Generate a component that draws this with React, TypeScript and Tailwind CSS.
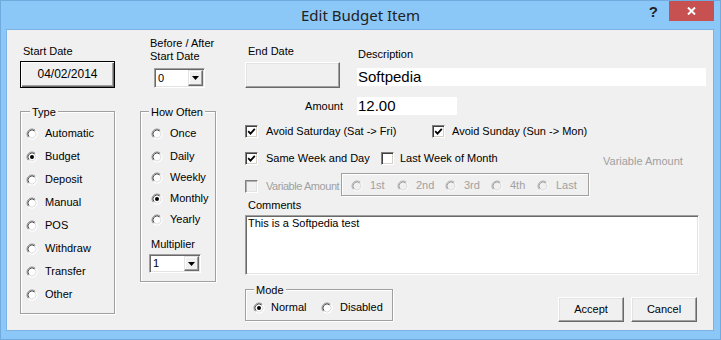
import React from "react";

function Radio({ checked = false, disabled = false }: { checked?: boolean; disabled?: boolean }) {
  return (
    <svg width="12" height="12" viewBox="0 0 12 12" className="shrink-0">
      <circle cx="6" cy="6" r="5.5" fill={disabled ? "#f0f0f0" : "#ffffff"} />
      <path d="M2.46 9.54 A5 5 0 0 1 9.54 2.46" fill="none" stroke={disabled ? "#b0b0b0" : "#8a8a8a"} strokeWidth="1" />
      <path d="M3.17 8.83 A4 4 0 0 1 8.83 3.17" fill="none" stroke={disabled ? "#a0a0a0" : "#505050"} strokeWidth="1" />
      <path d="M9.54 2.46 A5 5 0 0 1 2.46 9.54" fill="none" stroke="#ffffff" strokeWidth="1" />
      <path d="M8.83 3.17 A4 4 0 0 1 3.17 8.83" fill="none" stroke="#dcdcdc" strokeWidth="1" />
      {checked && <circle cx="6" cy="6" r="2" fill={disabled ? "#a0a0a0" : "#000000"} />}
    </svg>
  );
}

function Check({ checked = false, disabled = false }: { checked?: boolean; disabled?: boolean }) {
  return (
    <span
      className={
        disabled
          ? "w-[13px] h-[13px] shrink-0 flex items-center justify-center bg-[#f0f0f0] border border-t-[#808080] border-l-[#808080] border-b-white border-r-white shadow-[inset_1px_1px_0_#b0b0b0,inset_-1px_-1px_0_#e3e3e3]"
          : "w-[13px] h-[13px] shrink-0 flex items-center justify-center bg-white border border-t-[#808080] border-l-[#808080] border-b-white border-r-white shadow-[inset_1px_1px_0_#404040,inset_-1px_-1px_0_#d4d0c8]"
      }
    >
      {checked && (
        <svg width="9" height="9" viewBox="0 0 9 9">
          <path d="M1.2 4.2 L3.5 6.6 L7.8 1.8" stroke="#000" strokeWidth="1.8" fill="none" />
        </svg>
      )}
    </span>
  );
}

function Combo({ className, value }: { className: string; value: string }) {
  return (
    <div
      className={
        "flex bg-white p-[1px] border border-t-[#a0a0a0] border-l-[#a0a0a0] border-b-white border-r-white shadow-[inset_1px_1px_0_#696969,inset_-1px_-1px_0_#e3e3e3] " +
        className
      }
    >
      <span className="flex-1 pl-[2px] flex items-center">{value}</span>
      <span className="w-[15px] flex items-center justify-center bg-[#f0f0f0] border border-t-[#e3e3e3] border-l-[#e3e3e3] border-b-[#696969] border-r-[#696969] shadow-[inset_-1px_-1px_0_#a0a0a0,inset_1px_1px_0_#fff]">
        <svg width="7" height="4" viewBox="0 0 7 4">
          <path d="M0 0 H7 L3.5 4 Z" fill="#000" />
        </svg>
      </span>
    </div>
  );
}

function Group({
  className,
  legend,
  legendClass,
  children,
}: {
  className: string;
  legend: string;
  legendClass: string;
  children?: React.ReactNode;
}) {
  return (
    <div className={"relative border border-[#a0a0a0] shadow-[inset_1px_1px_0_#fff,1px_1px_0_#fff] " + className}>
      <span className={"absolute top-[-6px] bg-[#f0f0f0] px-[2px] " + legendClass}>{legend}</span>
      {children}
    </div>
  );
}

const raised =
  "bg-[#f0f0f0] border border-t-white border-l-white border-b-[#696969] border-r-[#696969] shadow-[inset_-1px_-1px_0_#a0a0a0,inset_1px_1px_0_#e3e3e3]";

export default function App() {
  const types = ["Automatic", "Budget", "Deposit", "Manual", "POS", "Withdraw", "Transfer", "Other"];
  const often = ["Daily", "Weekly", "Monthly", "Yearly"];
  const nth = [
    { t: "1st", w: "w-[46px]" },
    { t: "2nd", w: "w-[48px]" },
    { t: "3rd", w: "w-[46px]" },
    { t: "4th", w: "w-[46px]" },
    { t: "Last", w: "" },
  ];
  return (
    <div className="w-[721px] h-[340px] bg-[#8bc7f7] border border-[#70aadf] flex flex-col overflow-hidden">
      <div className="h-[29px] shrink-0 grid grid-cols-[1fr_auto_1fr]">
        <div />
        <div className="font-['Noto_Sans',sans-serif] text-[15px] leading-[20px] pt-[4px] text-[#222]">Edit Budget Item</div>
        <div className="flex justify-end items-start pr-[6px]">
          <span className="mt-[3px] mr-[11px] font-['Liberation_Sans',sans-serif] font-bold text-[15px] leading-[15px] text-[#222]">?</span>
          <div className="w-[45px] h-[20px] bg-[#c75050] flex items-center justify-center">
            <svg width="9" height="8" viewBox="0 0 9 8">
              <path d="M1 0.5 L8 7.5 M8 0.5 L1 7.5" stroke="#fff" strokeWidth="2" />
            </svg>
          </div>
        </div>
      </div>

      <div className="ml-[6px] w-[706px] h-[300px] bg-[#f0f0f0] shadow-[0_0_0_1px_#7db3e4] pt-[7px] pl-[13px] flex items-start text-black font-['Liberation_Sans',Arial,sans-serif] text-[11px] leading-[13px] whitespace-nowrap">
        {/* Column 1 */}
        <div className="w-[95px] flex flex-col">
          <div className="mt-[8px] pl-[3px]">Start Date</div>
          <div className="mt-[3px] h-[27px] border border-black bg-[#f0f0f0] shadow-[inset_1px_1px_0_#fff,inset_-1px_-1px_0_#696969,inset_-2px_-2px_0_#a0a0a0] flex items-center justify-center text-[12px]">
            04/02/2014
          </div>
          <Group className="mt-[23px] h-[203px]" legend="Type" legendClass="left-[9px]">
            <div className="pt-[10px] pl-[5px] flex flex-col">
              {types.map((t) => (
                <div key={t} className="h-[23px] flex items-center gap-[7px]">
                  <Radio checked={t === "Budget"} />
                  <span>{t}</span>
                </div>
              ))}
            </div>
          </Group>
        </div>

        {/* Column 2 */}
        <div className="ml-[25px] w-[76px] flex flex-col">
          <div className="pl-[10px]">
            Before / After
            <br />
            Start Date
          </div>
          <Combo className="mt-[5px] ml-[14px] w-[51px] h-[20px]" value="0" />
          <Group className="mt-[23px] h-[171px]" legend="How Often" legendClass="left-[8px]">
            <div className="pt-[11px] pl-[10px] flex flex-col">
              <div className="h-[21px] mb-[2px] flex items-center gap-[7px]">
                <Radio />
                <span>Once</span>
              </div>
              {often.map((t) => (
                <div key={t} className="h-[21px] flex items-center gap-[7px]">
                  <Radio checked={t === "Monthly"} />
                  <span>{t}</span>
                </div>
              ))}
            </div>
            <div className="mt-[8px] pl-[10px]">Multiplier</div>
            <Combo className="mt-[3px] ml-[8px] w-[52px] h-[19px]" value="1" />
          </Group>
        </div>

        {/* Column 3 */}
        <div className="ml-[29px] w-[461px] flex flex-col">
          <div className="flex items-start">
            <div className="w-[95px] flex flex-col">
              <div className="mt-[8px] pl-[3px]">End Date</div>
              <div className={"mt-[4px] h-[26px] " + raised} />
            </div>
            <div className="ml-[17px] w-[349px] flex flex-col">
              <div className="mt-[11px] pl-[1px]">Description</div>
              <div className="mt-[7px] h-[18px] bg-white pl-[1px] text-[15px] leading-[18px]">Softpedia</div>
            </div>
          </div>

          <div className="mt-[9px] flex items-center">
            <div className="w-[98px] text-right">Amount</div>
            <div className="ml-[14px] w-[100px] h-[18px] bg-white pl-[1px] text-[15px] leading-[18px]">12.00</div>
          </div>

          <div className="mt-[8px] h-[16px] flex items-center">
            <div className="w-[187px] flex items-center gap-[8px]">
              <Check checked />
              <span>Avoid Saturday (Sat -&gt; Fri)</span>
            </div>
            <div className="flex items-center gap-[7px]">
              <Check checked />
              <span>Avoid Sunday (Sun -&gt; Mon)</span>
            </div>
          </div>

          <div className="mt-[11px] h-[16px] flex items-center">
            <div className="w-[136px] flex items-center gap-[8px]">
              <Check checked />
              <span>Same Week and Day</span>
            </div>
            <div className="w-[222px] flex items-center gap-[6px]">
              <Check />
              <span>Last Week of Month</span>
            </div>
            <span className="text-[#a0a0a0] translate-y-[3px]">Variable Amount</span>
          </div>

          <div className="mt-[7px] flex items-start">
            <div className="w-[96px] h-[23px] overflow-hidden flex items-center gap-[8px] pt-[4px] text-[#a0a0a0]">
              <Check disabled />
              <span className="tracking-[-0.45px]">Variable Amount</span>
            </div>
            <div className="w-[248px] h-[23px] border border-[#a0a0a0] shadow-[inset_1px_1px_0_#fff,1px_1px_0_#fff] flex items-center pl-[9px] pt-[2px] text-[#a0a0a0]">
              {nth.map((n) => (
                <div key={n.t} className={"flex items-center gap-[7px] " + n.w}>
                  <Radio disabled />
                  <span>{n.t}</span>
                </div>
              ))}
            </div>
          </div>

          <div className="mt-[3px] pl-[3px]">Comments</div>
          <div className="mt-[3px] w-[454px] h-[60px] bg-white pl-[2px] pt-[1px] border border-t-[#a0a0a0] border-l-[#a0a0a0] border-b-white border-r-white shadow-[inset_1px_1px_0_#696969,inset_-1px_-1px_0_#e3e3e3]">
            This is a Softpedia test
          </div>

          <div className="mt-[14px] flex items-start">
            <Group className="w-[148px] h-[32px]" legend="Mode" legendClass="left-[8px]">
              <div className="pt-[11px] pl-[7px] flex items-center">
                <div className="w-[68px] flex items-center gap-[6px]">
                  <Radio checked />
                  <span>Normal</span>
                </div>
                <div className="flex items-center gap-[7px]">
                  <Radio />
                  <span>Disabled</span>
                </div>
              </div>
            </Group>
            <button className={"ml-[165px] mt-[8px] w-[66px] h-[25px] flex items-center justify-center " + raised}>Accept</button>
            <button className={"ml-[7px] mt-[8px] w-[66px] h-[25px] flex items-center justify-center " + raised}>Cancel</button>
          </div>
        </div>
      </div>
    </div>
  );
}
